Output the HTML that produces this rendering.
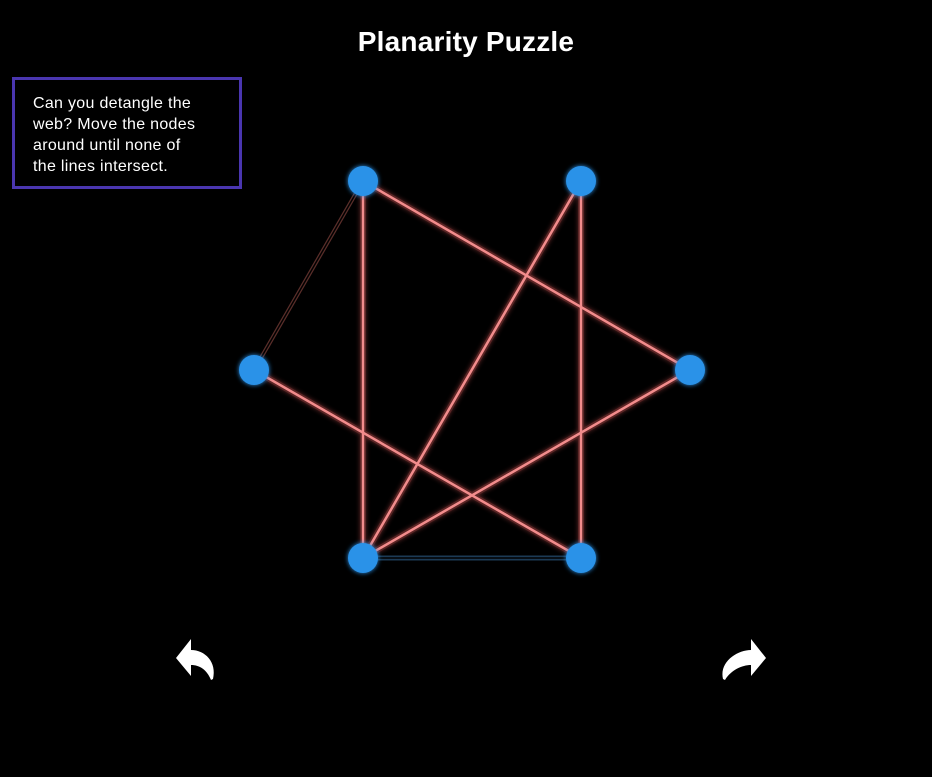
<!DOCTYPE html>
<html><head><meta charset="utf-8"><style>
html,body{margin:0;padding:0;background:#000;width:932px;height:777px;overflow:hidden;font-family:"Liberation Sans",sans-serif;}
h1{position:absolute;left:0;width:932px;top:26px;margin:0;text-align:center;color:#fff;font-size:28px;font-weight:bold;letter-spacing:0.2px;}
.box{position:absolute;left:12px;top:77px;border:3px solid #4a36b0;width:224px;height:106px;}
.box p{margin:0;position:absolute;left:18px;top:13px;color:#fff;font-size:16px;line-height:21px;width:175px;letter-spacing:0.3px;}
svg{position:absolute;left:0;top:0;}
</style></head><body>
<h1>Planarity Puzzle</h1>
<div class="box"><p>Can you detangle the web? Move the nodes around until none of the lines intersect.</p></div>
<svg width="932" height="777">
<defs>
<filter id="g" x="-50%" y="-50%" width="200%" height="200%"><feGaussianBlur stdDeviation="2.5" result="b"/><feMerge><feMergeNode in="b"/><feMergeNode in="SourceGraphic"/></feMerge></filter>
</defs>
<g stroke="#e45d5d" stroke-width="6" opacity="0.4" filter="url(#g)">
<line x1="363" y1="181" x2="363" y2="558"/><line x1="363" y1="181" x2="690" y2="370"/><line x1="581" y1="181" x2="363" y2="558"/><line x1="581" y1="181" x2="581" y2="558"/><line x1="254" y1="370" x2="581" y2="558"/><line x1="690" y1="370" x2="363" y2="558"/>
</g>
<g stroke="#f28c8c" stroke-width="2.5">
<line x1="363" y1="181" x2="363" y2="558"/><line x1="363" y1="181" x2="690" y2="370"/><line x1="581" y1="181" x2="363" y2="558"/><line x1="581" y1="181" x2="581" y2="558"/><line x1="254" y1="370" x2="581" y2="558"/><line x1="690" y1="370" x2="363" y2="558"/>
</g>
<line x1="254" y1="370" x2="363" y2="181" stroke="#5a2e2a" stroke-width="4"/>
<line x1="254" y1="370" x2="363" y2="181" stroke="#000" stroke-width="1.5"/>
<line x1="363" y1="558" x2="581" y2="558" stroke="#1c3a55" stroke-width="5"/>
<line x1="363" y1="558" x2="581" y2="558" stroke="#000" stroke-width="1.5"/>
<g fill="#2a92e8" filter="url(#g)">
<circle cx="363" cy="181" r="15"/><circle cx="581" cy="181" r="15"/><circle cx="254" cy="370" r="15"/><circle cx="690" cy="370" r="15"/><circle cx="363" cy="558" r="15"/><circle cx="581" cy="558" r="15"/>
</g>
<path fill="#fff" d="M176,658 L191,639 L191,650 C205,650 217,662 213,679 L211,680 C207,670 200,665 191,665 L191,676 Z"/>
<path fill="#fff" d="M766,658 L751,639 L751,650 C737,650 719,662 723,679 L725,680 C731,670 742,665 751,665 L751,676 Z"/>
</svg>
</body></html>
